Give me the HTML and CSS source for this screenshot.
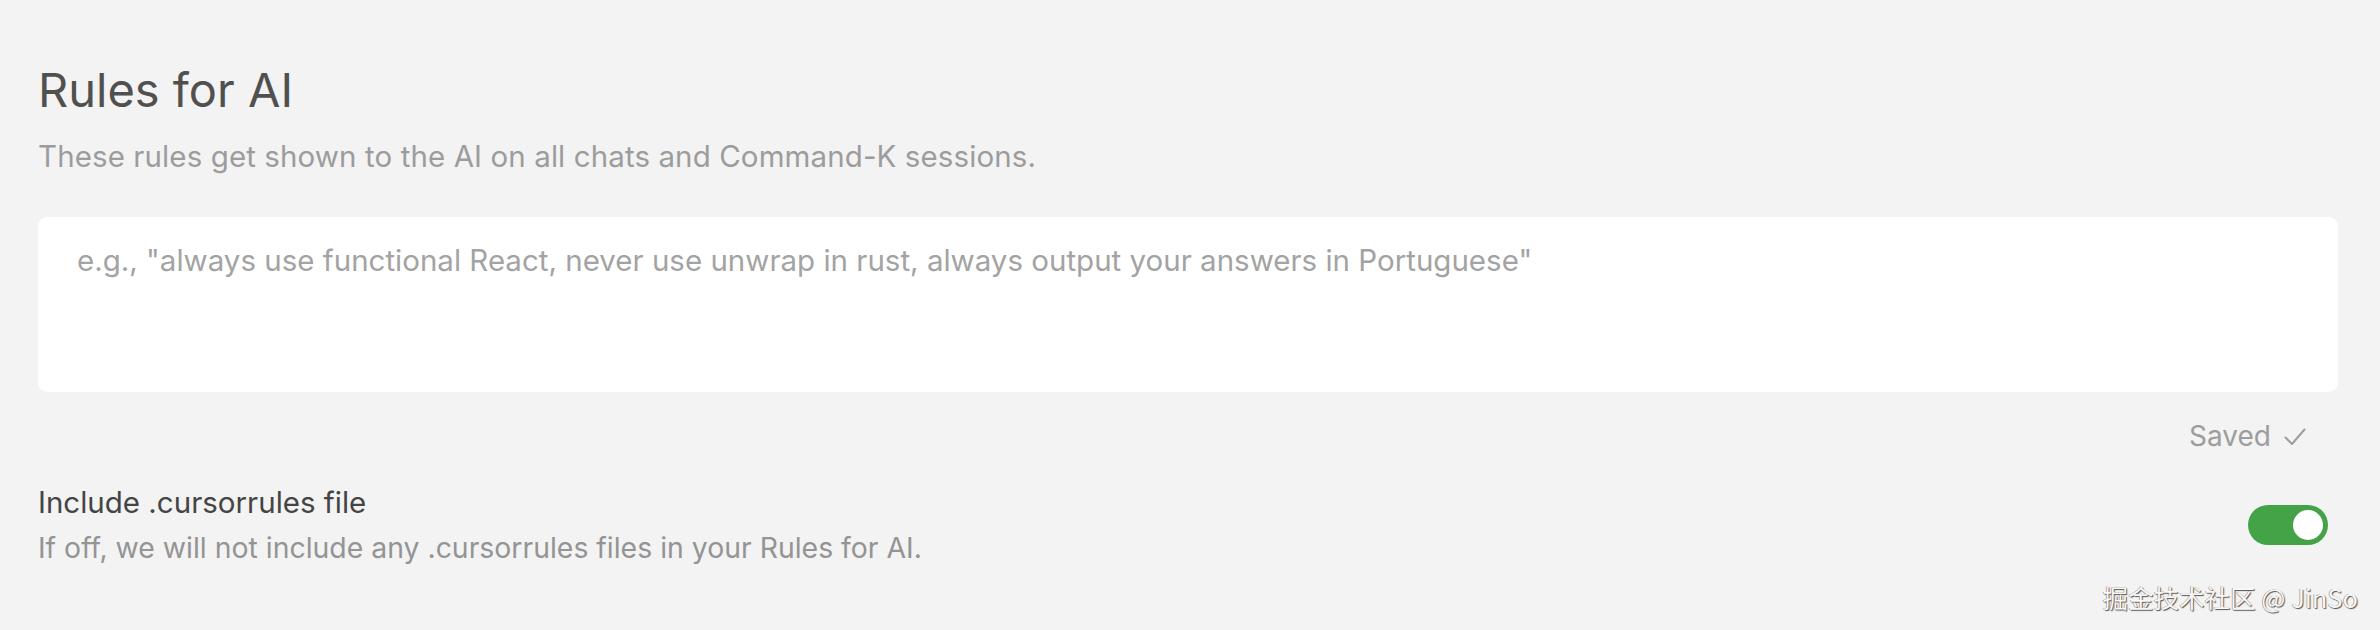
FILE: index.html
```html
<!DOCTYPE html>
<html lang="en">
<head>
<meta charset="utf-8">
<title>Rules for AI</title>
<link rel="stylesheet" href="styles.css">
</head>
<body>
<main class="page">
  <h1 class="title">Rules for AI</h1>
  <p class="subtitle">These rules get shown to the AI on all chats and Command-K sessions.</p>
  <textarea class="rules-input" placeholder="e.g., &quot;always use functional React, never use unwrap in rust, always output your answers in Portuguese&quot;"></textarea>
  <div class="status-row">
    <span class="status">Saved</span>
    <svg class="check" width="22" height="18" viewBox="0 0 22 18" aria-hidden="true"><path d="M1.5 9.5 L8 16 L20.5 1.5" fill="none" stroke="#9d9d9d" stroke-width="2" stroke-linecap="round" stroke-linejoin="round"/></svg>
  </div>
  <div class="setting-row">
    <div class="setting-text">
      <div class="setting-label">Include .cursorrules file</div>
      <div class="setting-desc">If off, we will not include any .cursorrules files in your Rules for AI.</div>
    </div>
    <div class="toggle on" role="switch" aria-checked="true"><span class="knob"></span></div>
  </div>
</main>
<div class="watermark">掘金技术社区 @ JinSo</div>
</body>
</html>
```
FILE: styles.css
```css
html, body {
  margin: 0;
  padding: 0;
  background: #f3f3f3;
  height: 100%;
}
body {
  font-family: Inter, "Noto Sans", "Liberation Sans", sans-serif;
  position: relative;
  overflow: hidden;
}
.page {
  padding: 62px 42px 0 38px;
  display: flex;
  flex-direction: column;
}
.title {
  margin: 0;
  font-size: 47px;
  line-height: 56px;
  font-weight: 400;
  color: #505050;
  letter-spacing: 0;
}
.subtitle {
  margin: 20px 0 0;
  font-size: 29.5px;
  line-height: 36px;
  color: #9c9c9c;
  letter-spacing: 0.1px;
}
.rules-input {
  margin-top: 43px;
  height: 175px;
  box-sizing: border-box;
  border: none;
  outline: none;
  resize: none;
  border-radius: 9px;
  background: #ffffff;
  padding: 25px 30px 0 39px;
  font-family: Inter, "Noto Sans", "Liberation Sans", sans-serif;
  font-size: 29.5px;
  line-height: 36px;
  color: #333;
}
.rules-input::placeholder {
  color: #a3a3a3;
  opacity: 1;
}
.status-row {
  display: flex;
  justify-content: flex-end;
  align-items: center;
  gap: 13px;
  padding-right: 32px;
  margin-top: 27px;
}
.status {
  font-size: 28px;
  line-height: 34px;
  color: #9d9d9d;
}
.check {
  display: block;
  margin-top: 1px;
}
.setting-row {
  margin-top: 32px;
  display: flex;
  align-items: center;
  justify-content: space-between;
  padding-right: 10px;
}
.setting-text {
  display: flex;
  flex-direction: column;
  gap: 12px;
}
.setting-label {
  font-size: 29.5px;
  line-height: 34px;
  color: #444444;
}
.setting-desc {
  font-size: 28.4px;
  line-height: 34px;
  color: #949494;
}
.toggle {
  width: 80px;
  height: 40px;
  box-sizing: border-box;
  border-radius: 20px;
  background: #44a346;
  padding: 5px;
  display: flex;
  justify-content: flex-end;
  align-items: center;
}
.knob {
  width: 30px;
  height: 30px;
  border-radius: 50%;
  background: #ffffff;
}
.watermark {
  position: absolute;
  right: 22px;
  bottom: 18px;
  font-family: "Noto Sans CJK SC", "Noto Sans", sans-serif;
  font-size: 25.5px;
  line-height: 30px;
  color: #f7f7f7;
  text-shadow: 1px 1px 1px #555, -0.5px -0.5px 0.5px #777;
}
```
